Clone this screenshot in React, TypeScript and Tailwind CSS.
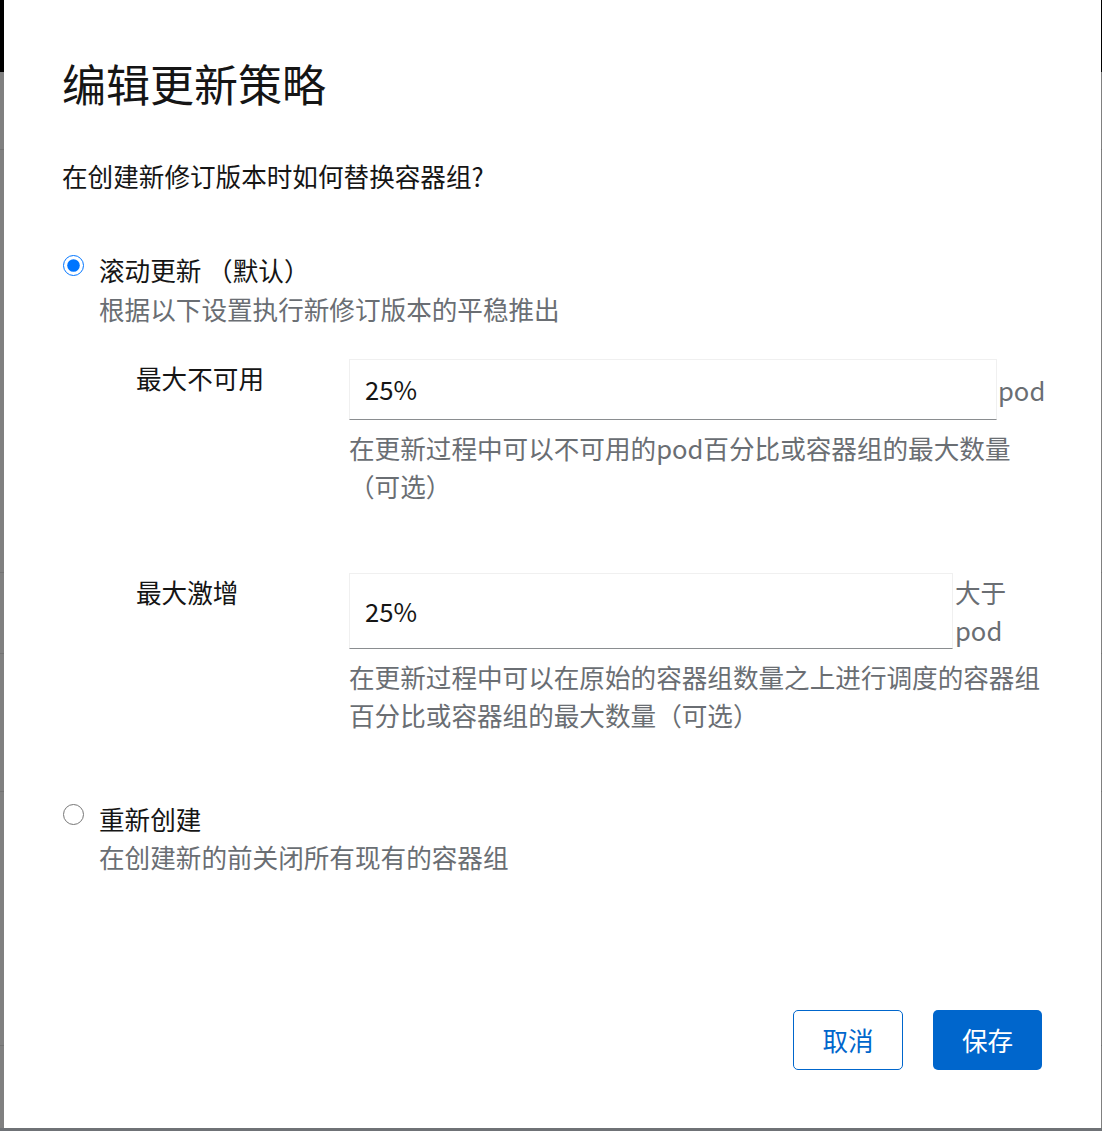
import React from "react";

const font = {
  fontFamily: '"Noto Sans CJK SC", "Noto Sans", sans-serif',
};

function Radio({ checked }: { checked: boolean }) {
  return (
    <input
      type="radio"
      name="strategy"
      defaultChecked={checked}
      className="m-0 mt-[4px] h-[21px] w-[21px] shrink-0 accent-[#0075ff]"
    />
  );
}

function Field({
  label,
  value,
  suffix,
  suffixClass,
  helper,
}: {
  label: string;
  value: string;
  suffix: string;
  suffixClass: string;
  helper: React.ReactNode;
}) {
  return (
    <div className="grid grid-cols-[213px_1fr]">
      <div className="text-[#151515] leading-[38px]">{label}</div>
      <div>
        <div className="flex items-stretch">
          <input
            defaultValue={value}
            className="min-h-[61px] min-w-0 flex-1 border border-[#f0f0f0] border-b-[#8a8d90] bg-white px-[15px] text-[25.6px] text-[#151515] outline-none"
            style={font}
          />
          <div className={`flex shrink-0 items-center leading-[38px] text-[#6a6e73] ${suffixClass}`}>
            {suffix}
          </div>
        </div>
        <p className="mt-[9px] leading-[38px] text-[#6a6e73]">{helper}</p>
      </div>
    </div>
  );
}

export default function App() {
  return (
    <div className="relative h-[1131px] w-[1102px] overflow-hidden bg-[#808080]" style={font}>
      {/* page behind the backdrop */}
      <div className="h-[72px] bg-black" />
      <div className="mt-[77px] h-px bg-[#737373]" />
      <div className="mt-[422px] h-px bg-[#737373]" />
      <div className="mt-[80px] h-px bg-[#737373]" />
      <div className="mt-[137px] h-px bg-[#737373]" />
      <div className="mt-[253px] h-px bg-[#737373]" />
      <div className="absolute bottom-0 left-0 h-[3px] w-full bg-[#6f7276]" />

      {/* modal */}
      <div className="absolute left-[4px] top-0 flex h-[1128px] w-[1097px] flex-col bg-white px-[58px] pb-[58px] pt-[55px] text-[25.6px] text-[#151515]">
        <h1 className="text-[44px] font-normal leading-[57px]">编辑更新策略</h1>

        <p className="mt-[45px] leading-[38px]">在创建新修订版本时如何替换容器组?</p>

        <div className="mt-[56px] flex gap-[15px] pl-[1px]">
          <Radio checked />
          <div className="flex-1">
            <div className="leading-[38px]">滚动更新 （默认）</div>
            <div className="leading-[40px] text-[#6a6e73]">根据以下设置执行新修订版本的平稳推出</div>

            <div className="mt-[30px] flex flex-col gap-[68px] pl-[37px]">
              <Field
                label="最大不可用"
                value="25%"
                suffix="pod"
                suffixClass="w-[46px] pl-[1px]"
                helper="在更新过程中可以不可用的pod百分比或容器组的最大数量（可选）"
              />
              <Field
                label="最大激增"
                value="25%"
                suffix="大于 pod"
                suffixClass="w-[90px] pl-[2px]"
                helper="在更新过程中可以在原始的容器组数量之上进行调度的容器组百分比或容器组的最大数量（可选）"
              />
            </div>
          </div>
        </div>

        <div className="mt-[66px] flex gap-[15px] pl-[1px]">
          <Radio checked={false} />
          <div className="flex-1">
            <div className="leading-[38px]">重新创建</div>
            <div className="leading-[38px] text-[#6a6e73]">在创建新的前关闭所有现有的容器组</div>
          </div>
        </div>

        <div className="mt-auto flex justify-end gap-[30px] pr-[1px]">
          <button className="h-[60px] w-[110px] rounded-[5px] border border-[#0066cc] bg-white text-[25.6px] text-[#0066cc]">
            取消
          </button>
          <button className="h-[60px] w-[109px] rounded-[5px] bg-[#0066cc] text-[25.6px] text-white">
            保存
          </button>
        </div>
      </div>
    </div>
  );
}
